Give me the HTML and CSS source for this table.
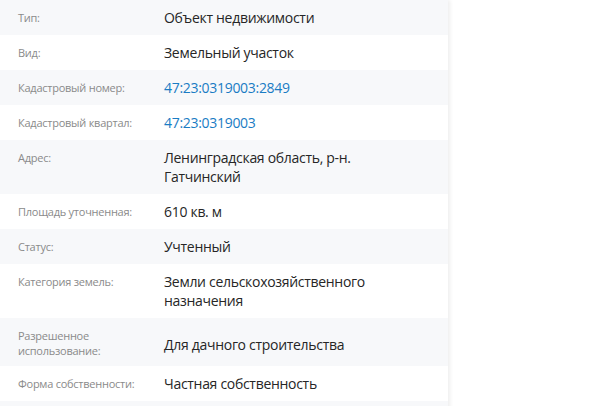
FILE: index.html
```html
<!DOCTYPE html>
<html lang="ru">
<head>
<meta charset="utf-8">
<title>Объект</title>
<link rel="stylesheet" href="styles.css">
</head>
<body>
<div class="panel">
  <div class="row"><div class="label">Тип:</div><div class="value">Объект недвижимости</div></div>
  <div class="row"><div class="label">Вид:</div><div class="value">Земельный участок</div></div>
  <div class="row"><div class="label">Кадастровый номер:</div><div class="value"><a class="link" href="#">47:23:0319003:2849</a></div></div>
  <div class="row"><div class="label">Кадастровый квартал:</div><div class="value"><a class="link" href="#">47:23:0319003</a></div></div>
  <div class="row"><div class="label">Адрес:</div><div class="value">Ленинградская область, р-н. Гатчинский</div></div>
  <div class="row"><div class="label">Площадь уточненная:</div><div class="value">610 кв. м</div></div>
  <div class="row"><div class="label">Статус:</div><div class="value">Учтенный</div></div>
  <div class="row"><div class="label">Категория земель:</div><div class="value">Земли сельскохозяйственного назначения</div></div>
  <div class="row"><div class="label">Разрешенное использование:</div><div class="value value-mid">Для дачного строительства</div></div>
  <div class="row"><div class="label">Форма собственности:</div><div class="value">Частная собственность</div></div>
  <div class="row row-empty"></div>
</div>
</body>
</html>
```

FILE: styles.css
```css
html, body {
  margin: 0;
  padding: 0;
  background: #ffffff;
}
body {
  font-family: "Open Sans", "Noto Sans", sans-serif;
  height: 406px;
  overflow: hidden;
}
.panel {
  width: 448px;
  min-height: 406px;
  background: #ffffff;
  box-shadow: 2px 0 4px rgba(0, 0, 0, 0.07);
}
.row {
  display: flex;
  align-items: flex-start;
  padding: 8px 40px 8px 18px;
}
.row:nth-child(odd) {
  background: #f7f8fa;
}
.row-empty {
  height: 19px;
}
.label {
  flex: 0 0 130px;
  margin-right: 16px;
  padding-top: 2px;
  font-size: 11px;
  line-height: 15px;
  letter-spacing: -0.25px;
  color: #8a8a8a;
}
.value {
  flex: 1 1 auto;
  font-size: 14px;
  line-height: 19px;
  letter-spacing: -0.3px;
  color: #262626;
}
.value-mid {
  align-self: center;
  margin-top: 4px;
}
.link {
  color: #1a7cc4;
  text-decoration: none;
}
```
